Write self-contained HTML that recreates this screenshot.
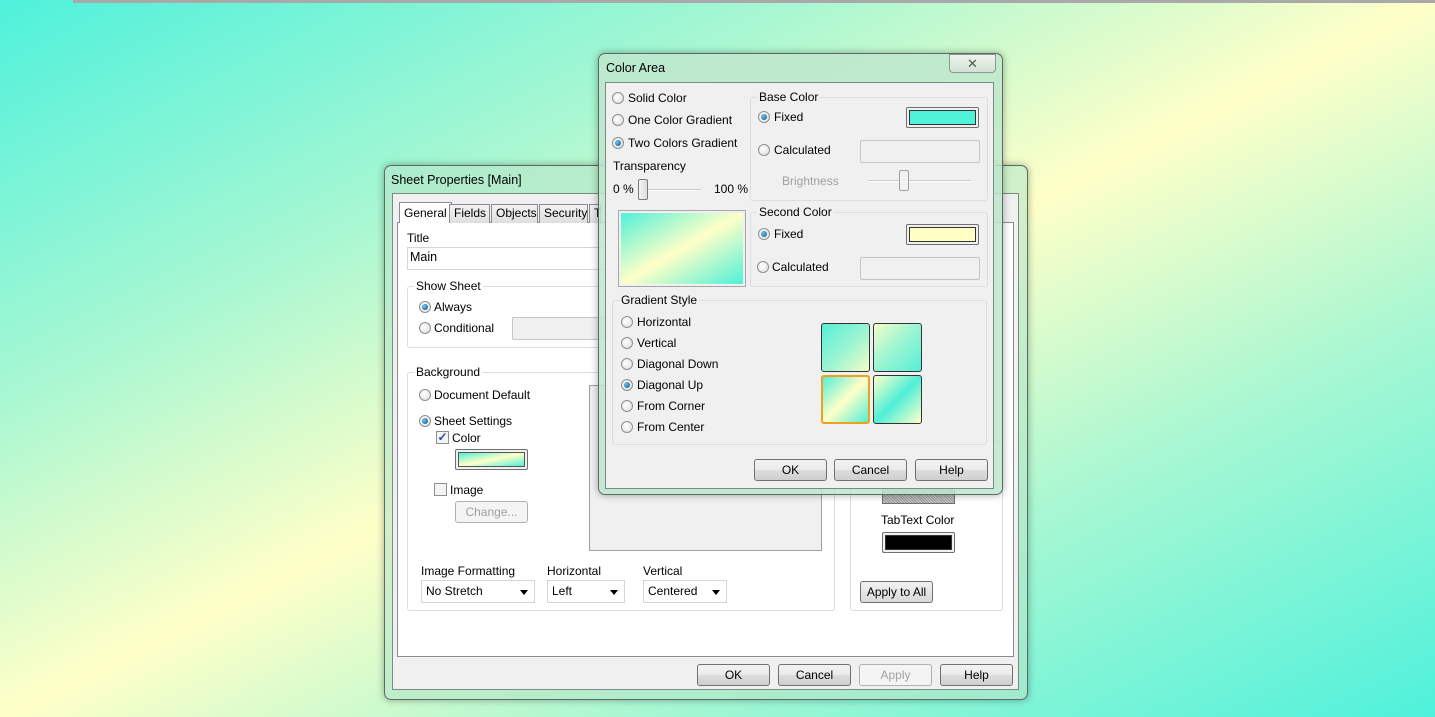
<!DOCTYPE html>
<html><head><meta charset="utf-8">
<style>
*{box-sizing:border-box;margin:0;padding:0}
body{width:1435px;height:717px;overflow:hidden;position:relative;font-family:"Liberation Sans",Arial,sans-serif;font-size:12px;color:#000;
background:linear-gradient(to bottom right,#4ff1db 0%,#a8f7d2 28%,#ffffc8 50%,#a8f7d2 72%,#4ff1db 100%);}
.a{position:absolute}
.t{position:absolute;white-space:nowrap;line-height:14px}
.frame{position:absolute;border:1px solid #5a6a64;border-radius:7px;background:rgba(180,228,200,.6);box-shadow:0 0 8px rgba(0,0,0,.35)}
.client{position:absolute;background:#f0f0f0;border:1px solid #7b8a85}
.grp{position:absolute;border:1px solid #d5dfe5;border-radius:3px}
.gl{position:absolute;background:#f0f0f0;padding:0 2px;line-height:14px;white-space:nowrap;top:-8px;left:6px}
.radio{position:absolute;width:12px;height:12px;border-radius:50%;border:1px solid #8e8f8f;background:radial-gradient(circle at 40% 40%,#fff,#dcdcdc)}
.radio.on::after{content:"";position:absolute;left:2px;top:2px;width:6px;height:6px;border-radius:50%;background:radial-gradient(circle at 35% 35%,#6cc4f0,#0a4f86)}
.btn{position:absolute;height:22px;border:1px solid #707070;border-radius:3px;background:linear-gradient(#f2f2f2 0%,#ebebeb 50%,#dddddd 51%,#cfcfcf 100%);text-align:center;line-height:20px}
.btn.dis{color:#a0a0a0;border-color:#adb2b5;background:#f4f4f4}
.box{position:absolute;border:1px solid #c5c5c5;background:#f0f0f0;border-radius:2px}
.sw{position:absolute;border:1px solid #707070;border-radius:2px;background:#f0f0f0;padding:2px}
.sw div{width:100%;height:100%;border:1px solid #333}
.dd{position:absolute;height:23px;border:1px solid #d0d6dc;background:#fff;line-height:21px;padding-left:4px}
.dd::after{content:"";position:absolute;right:6px;top:9px;border-left:4px solid transparent;border-right:4px solid transparent;border-top:5px solid #000}
.tab{position:absolute;top:204px;height:19px;border:1px solid #898c95;border-bottom:none;background:linear-gradient(#f2f2f2,#dedede);line-height:17px;padding:0 4px}
.sq{position:absolute;width:49px;height:49px;border:1px solid #333;border-radius:3px}
</style></head><body>
<div class="a" style="left:73px;top:0;width:1362px;height:3px;background:#a9a9a9"></div>

<!-- Sheet Properties -->
<div class="frame" style="left:384px;top:165px;width:644px;height:535px"></div>
<div class="t" style="left:391px;top:173px;font-size:12.5px">Sheet Properties [Main]</div>
<div class="client" style="left:392px;top:193px;width:627px;height:497px"></div>
<div class="a" style="left:397px;top:222px;width:617px;height:435px;background:#fff;border:1px solid #898c95"></div>
<div class="tab" style="left:399px;top:202px;height:21px;background:#fff;padding-top:2px">General</div>
<div class="tab" style="left:449px;width:41px">Fields</div>
<div class="tab" style="left:491px;width:47px">Objects</div>
<div class="tab" style="left:539px;width:49px">Security</div>
<div class="tab" style="left:589px;width:12px">T</div>
<div class="t" style="left:407px;top:231px">Title</div>
<div class="a" style="left:407px;top:247px;width:200px;height:23px;border:1px solid #d0d6dc;background:#fff"></div>
<div class="t" style="left:410px;top:250px;font-size:12.5px">Main</div>
<div class="grp" style="left:407px;top:286px;width:200px;height:62px;background:#fff"><div class="gl" style="background:#fff">Show Sheet</div></div>
<div class="radio on" style="left:419px;top:301px"></div><div class="t" style="left:434px;top:300px">Always</div>
<div class="radio" style="left:419px;top:322px"></div><div class="t" style="left:434px;top:321px">Conditional</div>
<div class="box" style="left:512px;top:317px;width:95px;height:23px"></div>
<div class="grp" style="left:407px;top:372px;width:428px;height:239px"><div class="gl" style="background:#fff">Background</div></div>
<div class="radio" style="left:419px;top:389px"></div><div class="t" style="left:434px;top:388px">Document Default</div>
<div class="radio on" style="left:419px;top:415px"></div><div class="t" style="left:434px;top:414px">Sheet Settings</div>
<div class="a" style="left:436px;top:431px;width:13px;height:13px;border:1px solid #8e8f8f;background:#f4f4f4;color:#2a4fb0;font-size:12px;line-height:11px;text-align:center;font-weight:bold">✓</div>
<div class="t" style="left:452px;top:431px">Color</div>
<div class="sw" style="left:455px;top:449px;width:73px;height:21px"><div style="border-color:#555;background:linear-gradient(to bottom right,#50f0d8,#ffffc8 50%,#50f0d8)"></div></div>
<div class="a" style="left:434px;top:483px;width:13px;height:13px;border:1px solid #8e8f8f;background:#f4f4f4"></div>
<div class="t" style="left:450px;top:483px">Image</div>
<div class="btn dis" style="left:455px;top:501px;width:73px">Change...</div>
<div class="a" style="left:589px;top:385px;width:233px;height:166px;border:1px solid #a0a0a0;background:#f0f0f0"></div>
<div class="t" style="left:421px;top:564px">Image Formatting</div>
<div class="dd" style="left:421px;top:580px;width:114px">No Stretch</div>
<div class="t" style="left:547px;top:564px">Horizontal</div>
<div class="dd" style="left:547px;top:580px;width:78px">Left</div>
<div class="t" style="left:643px;top:564px">Vertical</div>
<div class="dd" style="left:643px;top:580px;width:84px">Centered</div>
<div class="grp" style="left:850px;top:440px;width:153px;height:171px"></div>
<div class="a" style="left:882px;top:488px;width:73px;height:16px;border:1px solid #707070;background:repeating-linear-gradient(45deg,#999 0 1px,#ccc 1px 2px)"></div>
<div class="t" style="left:881px;top:513px">TabText Color</div>
<div class="sw" style="left:882px;top:532px;width:73px;height:21px"><div style="background:#000"></div></div>
<div class="btn" style="left:860px;top:581px;width:73px;height:22px;background:linear-gradient(#f2f2f2,#d8d8d8)">Apply to All</div>
<div class="btn" style="left:697px;top:664px;width:73px">OK</div>
<div class="btn" style="left:778px;top:664px;width:73px">Cancel</div>
<div class="btn dis" style="left:859px;top:664px;width:73px">Apply</div>
<div class="btn" style="left:940px;top:664px;width:73px">Help</div>

<!-- Color Area -->
<div class="frame" style="left:598px;top:53px;width:405px;height:442px;background:rgba(190,230,205,.85)"></div>
<div class="t" style="left:606px;top:61px;font-size:12.5px">Color Area</div>
<div class="a" style="left:949px;top:54px;width:47px;height:19px;border:1px solid #8a9a92;border-radius:0 0 4px 4px;background:linear-gradient(#eef4ec,#d2e2d4);text-align:center;font-size:13px;line-height:17px;color:#555">✕</div>
<div class="client" style="left:605px;top:82px;width:389px;height:407px"></div>
<div class="radio" style="left:612px;top:92px"></div><div class="t" style="left:628px;top:91px">Solid Color</div>
<div class="radio" style="left:612px;top:114px"></div><div class="t" style="left:628px;top:113px">One Color Gradient</div>
<div class="radio on" style="left:612px;top:137px"></div><div class="t" style="left:628px;top:136px">Two Colors Gradient</div>
<div class="t" style="left:613px;top:159px">Transparency</div>
<div class="t" style="left:613px;top:182px">0 %</div>
<div class="a" style="left:640px;top:189px;width:61px;height:2px;background:#c8c8c8;border-bottom:1px solid #fff"></div>
<div class="a" style="left:638px;top:179px;width:10px;height:21px;border:1px solid #7a7a7a;border-radius:2px;background:linear-gradient(90deg,#f4f4f4,#dcdcdc)"></div>
<div class="t" style="left:714px;top:182px">100 %</div>
<div class="a" style="left:618px;top:210px;width:128px;height:77px;border:1px solid #a8a8a8;padding:2px;background:#f0f0f0"><div style="width:100%;height:100%;background:linear-gradient(to bottom right,#50f0d8,#ffffc8 50%,#50f0d8)"></div></div>
<div class="grp" style="left:750px;top:97px;width:238px;height:104px"><div class="gl">Base Color</div></div>
<div class="radio on" style="left:758px;top:111px"></div><div class="t" style="left:774px;top:110px">Fixed</div>
<div class="sw" style="left:906px;top:107px;width:73px;height:21px"><div style="background:#50f2da"></div></div>
<div class="radio" style="left:758px;top:144px"></div><div class="t" style="left:774px;top:143px">Calculated</div>
<div class="box" style="left:860px;top:140px;width:120px;height:23px"></div>
<div class="t" style="left:782px;top:174px;color:#a0a0a0">Brightness</div>
<div class="a" style="left:868px;top:180px;width:103px;height:2px;background:#c8c8c8;border-bottom:1px solid #fff"></div>
<div class="a" style="left:899px;top:170px;width:10px;height:21px;border:1px solid #a0a0a0;border-radius:2px;background:#f2f2f2"></div>
<div class="grp" style="left:750px;top:212px;width:238px;height:75px"><div class="gl">Second Color</div></div>
<div class="radio on" style="left:758px;top:228px"></div><div class="t" style="left:774px;top:227px">Fixed</div>
<div class="sw" style="left:906px;top:224px;width:73px;height:21px"><div style="background:#ffffc4"></div></div>
<div class="radio" style="left:757px;top:261px"></div><div class="t" style="left:772px;top:260px">Calculated</div>
<div class="box" style="left:860px;top:257px;width:120px;height:23px"></div>
<div class="grp" style="left:612px;top:300px;width:375px;height:145px"><div class="gl">Gradient Style</div></div>
<div class="radio" style="left:621px;top:316px"></div><div class="t" style="left:637px;top:315px">Horizontal</div>
<div class="radio" style="left:621px;top:337px"></div><div class="t" style="left:637px;top:336px">Vertical</div>
<div class="radio" style="left:621px;top:358px"></div><div class="t" style="left:637px;top:357px">Diagonal Down</div>
<div class="radio on" style="left:621px;top:379px"></div><div class="t" style="left:637px;top:378px">Diagonal Up</div>
<div class="radio" style="left:621px;top:400px"></div><div class="t" style="left:637px;top:399px">From Corner</div>
<div class="radio" style="left:621px;top:421px"></div><div class="t" style="left:637px;top:420px">From Center</div>
<div class="sq" style="left:821px;top:323px;background:linear-gradient(to bottom right,#55efd6,#a0f5d2 55%,#f2fcc8)"></div>
<div class="sq" style="left:873px;top:323px;background:linear-gradient(to bottom right,#f5fdc8,#a0f5d2 45%,#55efd6)"></div>
<div class="sq" style="left:821px;top:375px;border:2px solid #f0a020;background:linear-gradient(to bottom right,#55efd6,#ffffc8 50%,#55efd6)"></div>
<div class="sq" style="left:873px;top:375px;background:linear-gradient(to bottom right,#ffffc8,#50efd8 50%,#ffffc8)"></div>
<div class="btn" style="left:754px;top:459px;width:73px">OK</div>
<div class="btn" style="left:834px;top:459px;width:73px">Cancel</div>
<div class="btn" style="left:915px;top:459px;width:73px">Help</div>
</body></html>
